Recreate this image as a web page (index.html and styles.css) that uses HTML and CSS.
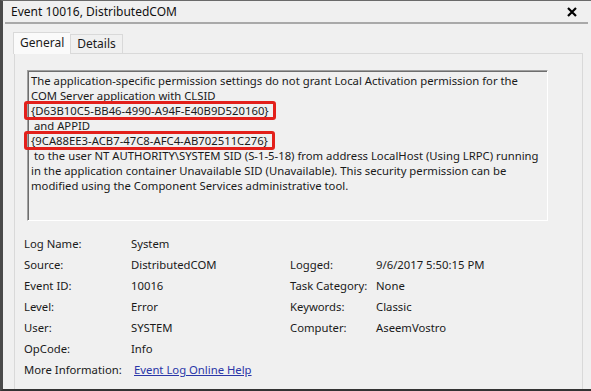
FILE: index.html
```html
<!DOCTYPE html>
<html lang="en">
<head>
  <meta charset="UTF-8" />
  <title>Event 10016, DistributedCOM</title>
  <link rel="stylesheet" href="styles.css">
</head>
<body>
  <div class="window">
    <div class="titlebar">
      <span class="title">Event 10016, DistributedCOM</span>
      <svg class="close" width="10" height="10" viewBox="0 0 10 10">
        <path d="M1 1 L9 9 M9 1 L1 9" stroke="#000" stroke-width="2.2" />
      </svg>
    </div>

    <div class="body">
      <div class="tabs">
        <div class="tab active">General</div>
        <div class="tab">Details</div>
      </div>

      <div class="panel">
        <div class="message">
          <div class="line">The application-specific permission settings do not grant Local Activation permission for the</div>
          <div class="line">COM Server application with CLSID</div>
          <div class="line"><span class="mark">{D63B10C5-BB46-4990-A94F-E40B9D520160}</span></div>
          <div class="line"> and APPID</div>
          <div class="line"><span class="mark">{9CA88EE3-ACB7-47C8-AFC4-AB702511C276}</span></div>
          <div class="line"> to the user NT AUTHORITY\SYSTEM SID (S-1-5-18) from address LocalHost (Using LRPC) running</div>
          <div class="line">in the application container Unavailable SID (Unavailable). This security permission can be</div>
          <div class="line">modified using the Component Services administrative tool.</div>
        </div>

        <div class="props">
          <span>Log Name:</span><span>System</span><span></span><span></span>
          <span>Source:</span><span>DistributedCOM</span><span>Logged:</span><span>9/6/2017 5:50:15 PM</span>
          <span>Event ID:</span><span>10016</span><span>Task Category:</span><span>None</span>
          <span>Level:</span><span>Error</span><span>Keywords:</span><span>Classic</span>
          <span>User:</span><span>SYSTEM</span><span>Computer:</span><span>AseemVostro</span>
          <span>OpCode:</span><span>Info</span><span></span><span></span>
          <span>More Information:</span><span class="more"><a href="#">Event Log Online Help</a></span>
        </div>
      </div>
    </div>
  </div>
</body>
</html>
```

FILE: styles.css
```css
body {
  margin: 0;
  padding: 0;
  background: #f0f0f0;
  font-family: "Noto Sans", "Open Sans", sans-serif;
  font-size: 11.3px;
  color: #1a1a1a;
}

.window {
  width: 591px;
  height: 391px;
  box-sizing: border-box;
  border-left: 3px solid #4a4a4a;
  border-top: 1px solid #6a6a6a;
  border-bottom: 2px solid #333;
  background: #f0f0f0;
  display: flex;
  flex-direction: column;
  overflow: hidden;
}

.titlebar {
  height: 21px;
  display: flex;
  align-items: center;
  justify-content: space-between;
  padding: 0 11px 0 6px;
  margin: 0 3px 0 2px;
  border-bottom: 2px solid #a9a9a9;
}

.title {
  font-size: 12px;
  color: #111;
}

.body {
  flex: 1;
  display: flex;
  flex-direction: column;
  padding: 8px 8px 0 11px;
}

.tabs {
  display: flex;
  align-items: flex-end;
  height: 21px;
  margin-left: -1px;
  font-size: 12px;
}

.tab {
  height: 18px;
  line-height: 18px;
  padding: 0 6px;
  border: 1px solid #d9d9d9;
  border-bottom: none;
  background: #f0f0f0;
}

.tab.active {
  height: 21px;
  line-height: 20px;
  background: #fafafa;
  border-right: none;
  position: relative;
  z-index: 1;
  margin-bottom: -1px;
}

.panel {
  flex: 1;
  border: 1px solid #d9d9d9;
  border-bottom: none;
  padding: 16px 0 0 12px;
}

.message {
  width: 521px;
  height: 151px;
  box-sizing: border-box;
  border-top: 1px solid #a0a0a0;
  border-left: 1px solid #a0a0a0;
  border-right: 1px solid #fff;
  border-bottom: 1px solid #fff;
  box-shadow: inset 1px 1px 0 #6e6e6e;
  padding: 2px 0 0 3px;
  line-height: 15px;
}

.line {
  white-space: pre;
}

.mark {
  display: inline-block;
  border: 3px solid #e3201b;
  border-radius: 3px;
  padding: 0 4px 0 4px;
  margin: -2px 0 -2px -7px;
  line-height: 13px;
}

.props {
  display: grid;
  grid-template-columns: 107px 159px 86px auto;
  grid-auto-rows: 21px;
  align-items: center;
  margin: 12px 0 0 -3px;
}

.more {
  grid-column: 2 / span 3;
  padding-left: 3px;
}

.more a {
  color: #2a36a8;
  text-decoration: underline;
}
```
